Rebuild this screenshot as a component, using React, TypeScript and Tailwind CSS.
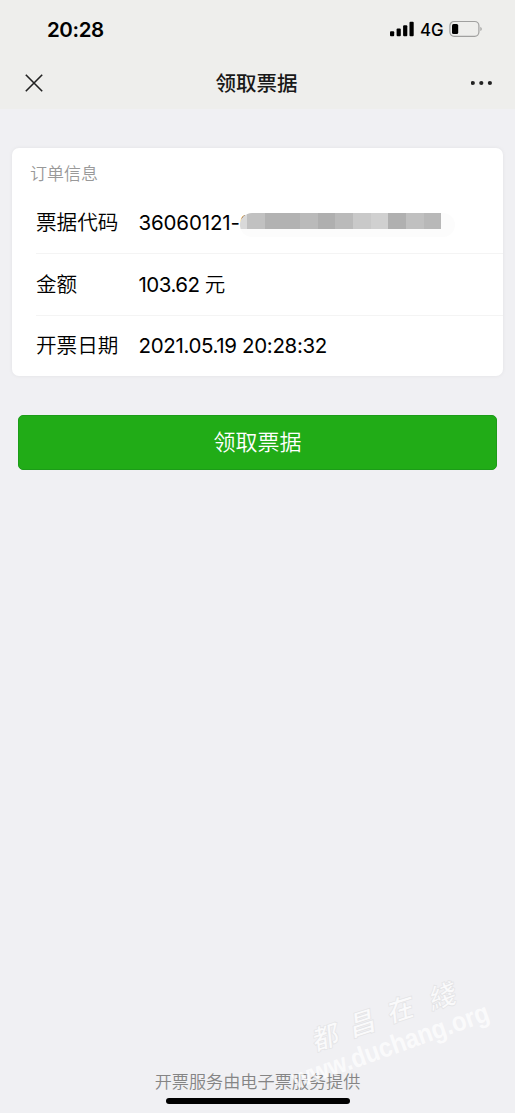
import type { ReactNode } from "react";

function StatusBar() {
  return (
    <div className="flex h-[58px] items-center justify-between pl-[47px] pr-[32px]">
      <span className="pt-px text-[20.5px] leading-6 font-semibold tracking-[-0.4px] text-black">20:28</span>
      <div className="flex items-center">
        <svg width="24" height="16" viewBox="0 0 24 16" fill="#000">
          <rect x="0" y="10.2" width="4.2" height="5" rx="1" />
          <rect x="6.6" y="7.6" width="4.2" height="7.6" rx="1" />
          <rect x="13.1" y="4.2" width="4.2" height="11" rx="1" />
          <rect x="19.5" y="0.7" width="4.2" height="14.5" rx="1" />
        </svg>
        <span className="ml-[6px] w-[24px] pt-px text-[16.8px] leading-6 font-[450] text-black">4G</span>
        <svg className="ml-[5px]" width="34" height="18" viewBox="0 0 34 18">
          <rect x="0.9" y="1.5" width="29" height="14.8" rx="4.2" fill="none" stroke="#a0a09f" strokeWidth="1.2" />
          <rect x="3" y="3.9" width="6.2" height="10.2" rx="1.5" fill="#000" />
          <path d="M31.4 6.7c1.8.8 1.8 3.6 0 4.4z" fill="#a0a09f" />
        </svg>
      </div>
    </div>
  );
}

function NavBar() {
  return (
    <div className="grid h-[51px] grid-cols-[1fr_auto_1fr] items-center pr-[22px] pb-[2px] pl-[22px]">
      <svg className="ml-[3px]" width="18" height="18" viewBox="0 0 18 18" stroke="#222" strokeWidth="1.6">
        <path d="M.8.8l16.4 16.4M17.2.8L.8 17.2" />
      </svg>
      <h1 className="mr-[2px] pt-[2px] text-[20.5px] leading-7 font-medium text-[#181818]">领取票据</h1>
      <svg className="justify-self-end" width="22" height="6" viewBox="0 0 22 6" fill="#222">
        <circle cx="1.8" cy="3" r="2.1" />
        <circle cx="10.3" cy="3" r="2.1" />
        <circle cx="18.9" cy="3" r="2.1" />
      </svg>
    </div>
  );
}

function Mosaic() {
  return (
    <span className="absolute top-[4px] left-[101.5px] block h-6 w-[215px] overflow-hidden rounded-full bg-[#fcfcfc]">
      <span className="flex h-4">
        <span className="w-[7px] bg-[#d9d9d9]" />
        <span className="w-[18px] bg-[#c1c1c1]" />
        <span className="w-[35px] bg-[#b2b2b2]" />
        <span className="w-[18px] bg-[#bababa]" />
        <span className="w-[17px] bg-[#afafaf]" />
        <span className="w-[18px] bg-[#bababa]" />
        <span className="w-[18px] bg-[#c9c9c9]" />
        <span className="w-[17px] bg-[#d0d0d0]" />
        <span className="w-[18px] bg-[#b0b0b0]" />
        <span className="w-[18px] bg-[#c0c0c0]" />
        <span className="w-[17px] bg-[#b8b8b8]" />
      </span>
    </span>
  );
}

function Row({ label, children, divider = true }: { label: string; children: ReactNode; divider?: boolean }) {
  return (
    <div className={divider ? "flex h-[62px] items-center border-b border-[#f4f4f4]" : "flex h-[60px] items-center"}>
      <span className="w-[102.5px] shrink-0 text-[20.6px] leading-7 font-[350]">{label}</span>
      <span className="relative text-[20.5px] leading-7 tracking-[-0.35px] whitespace-nowrap">{children}</span>
    </div>
  );
}

export default function App() {
  return (
    <main className="relative flex h-[1113px] w-[515px] flex-col bg-[#f0f0f3] font-[Inter,'Noto_Sans_CJK_SC',sans-serif]">
      <header className="h-[109px] shrink-0 bg-[#eeeeec]">
        <StatusBar />
        <NavBar />
      </header>

      <section className="mx-3 mt-[39px] h-[228px] shrink-0 rounded-[7px] bg-white pt-[13px] text-black shadow-[0_0_4px_rgba(0,0,0,0.06)]">
        <h2 className="h-[31px] pl-[18px] text-[17px] leading-[26px] font-[350] text-[#999]">订单信息</h2>
        <div className="pl-6">
          <Row label="票据代码">
            <span className="tracking-[-0.15px]">36060121-0</span>
            <Mosaic />
          </Row>
          <Row label="金额">
            <span className="tracking-[-0.5px]">103.62 </span>
            <span className="font-[350]">元</span>
          </Row>
          <Row label="开票日期" divider={false}>
            2021.05.19 20:28:32
          </Row>
        </div>
      </section>

      <button className="mx-[18px] mt-[39px] h-[55px] shrink-0 rounded-[5px] border border-[#1c9c18] bg-[#21ac17] pb-[2px] text-[22px] leading-8 font-[350] text-white">
        领取票据
      </button>

      <footer className="mt-auto flex flex-col items-center pb-[9px]">
        <p className="mb-[3px] text-[17.15px] leading-[26px] font-[350] text-[#858585]">开票服务由电子票服务提供</p>
        <div className="h-[6px] w-[184px] rounded-full bg-black" />
      </footer>

      <svg
        className="pointer-events-none absolute right-0 bottom-0 overflow-visible"
        width="235"
        height="143"
        viewBox="-10 0 235 143"
      >
        <g
          fontFamily="'Noto Sans CJK TC', sans-serif"
          fontSize="27"
          fontWeight="700"
          fill="#fafafb"
          stroke="#e2e2e4"
          strokeWidth="0.6"
          textAnchor="middle"
        >
          <text transform="translate(37 77) rotate(-18) skewX(-12)">都</text>
          <text transform="translate(74 63) rotate(-18) skewX(-12)">昌</text>
          <text transform="translate(112 49) rotate(-18) skewX(-12)">在</text>
          <text transform="translate(154 36) rotate(-18) skewX(-12)">綫</text>
        </g>
        <text
          transform="translate(6 119) rotate(-19.5)"
          fontFamily="'Liberation Sans', sans-serif"
          fontSize="27"
          fontWeight="bold"
          fill="#fff"
          fillOpacity="0.72"
          textLength="207"
          lengthAdjust="spacingAndGlyphs"
        >
          www.duchang.org
        </text>
      </svg>
    </main>
  );
}
